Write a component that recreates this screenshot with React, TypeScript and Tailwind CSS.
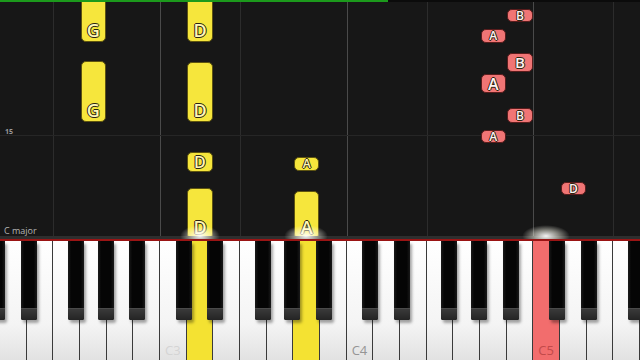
import React from 'react';

const KEY_W = 640 / 24;
const WHITE = ['D', 'E', 'F', 'G', 'A', 'B', 'C'];

// white keys start at D2
const whiteKeys = Array.from({ length: 24 }, (_, i) => {
  const name = WHITE[i % 7];
  const octave = 2 + Math.floor((i + 1) / 7);
  return { name, octave, label: name === 'C' ? `C${octave}` : '' };
});

const BLACK_OFFSET: Record<string, number> = { C: -3, D: 2, F: -4, G: -1, A: 4 };

// black key sitting right of each white note that has one
const blackKeys: { left: number }[] = [{ left: -3 - 8 }];
whiteKeys.forEach((k, i) => {
  const off = BLACK_OFFSET[k.name];
  if (off !== undefined) blackKeys.push({ left: (i + 1) * KEY_W + off - 8 });
});

const pressed: Record<number, string> = { 7: 'bg-[#f4e232]', 11: 'bg-[#f4e232]', 20: 'bg-[#f26d6d]' };

type Note = { key: number; top: number; h: number; label: string; size: number; color: 'y' | 'r' };

const notes: Note[] = [
  { key: 3, top: -6, h: 48, label: 'G', size: 18, color: 'y' },
  { key: 3, top: 61, h: 61, label: 'G', size: 18, color: 'y' },
  { key: 7, top: -6, h: 48, label: 'D', size: 18, color: 'y' },
  { key: 7, top: 62, h: 60, label: 'D', size: 18, color: 'y' },
  { key: 7, top: 152, h: 20, label: 'D', size: 16, color: 'y' },
  { key: 7, top: 188, h: 51, label: 'D', size: 18, color: 'y' },
  { key: 11, top: 157, h: 14, label: 'A', size: 12, color: 'y' },
  { key: 11, top: 191, h: 48, label: 'A', size: 18, color: 'y' },
  { key: 19, top: 9, h: 13, label: 'B', size: 12, color: 'r' },
  { key: 18, top: 29, h: 14, label: 'A', size: 12, color: 'r' },
  { key: 19, top: 53, h: 19, label: 'B', size: 15, color: 'r' },
  { key: 18, top: 74, h: 19, label: 'A', size: 16, color: 'r' },
  { key: 19, top: 108, h: 15, label: 'B', size: 12, color: 'r' },
  { key: 18, top: 130, h: 13, label: 'A', size: 12, color: 'r' },
  { key: 21, top: 182, h: 13, label: 'D', size: 12, color: 'r' },
];

const NoteBlock = ({ n }: { n: Note }) => {
  const tall = n.h > 24;
  const cls =
    n.color === 'y'
      ? 'bg-[#f6e63c] border-[#5e5410] text-[#fff7b8]'
      : 'bg-[#f07575] border-[#5a1c1c] text-[#fff2f2]';
  return (
    <div
      className={`absolute flex justify-center rounded-[5px] border ${cls} ${tall ? 'items-end pb-[2px]' : 'items-center'}`}
      style={{ left: n.key * KEY_W + 0.5, width: KEY_W - 1, top: n.top, height: n.h }}
    >
      <span
        className="font-semibold leading-none [text-shadow:-1px_0_#2a2410,1px_0_#2a2410,0_-1px_#2a2410,0_1px_#2a2410]"
        style={{ fontSize: n.size }}
      >
        {n.label}
      </span>
    </div>
  );
};

const gridLines = [
  { x: 53.33, c: 'bg-[#2c2c2c]' },
  { x: 160, c: 'bg-[#4a4a4a]' },
  { x: 240, c: 'bg-[#2c2c2c]' },
  { x: 346.67, c: 'bg-[#4a4a4a]' },
  { x: 426.67, c: 'bg-[#2c2c2c]' },
  { x: 533.33, c: 'bg-[#4a4a4a]' },
  { x: 613.33, c: 'bg-[#2c2c2c]' },
];

const glows = [
  { x: 200, w: 40 },
  { x: 306, w: 44 },
  { x: 546, w: 48 },
];

export default function App() {
  return (
    <div className="w-[640px] h-[360px] flex flex-col overflow-hidden bg-[#161616] font-['Open_Sans','Noto_Sans',sans-serif]">
      {/* piano roll */}
      <div className="relative h-[239px] overflow-hidden bg-[#171717]">
        {gridLines.map((g, i) => (
          <div key={i} className={`absolute top-0 bottom-0 w-px ${g.c}`} style={{ left: g.x }} />
        ))}
        <div className="absolute left-0 right-0 top-[135px] h-px bg-[#262626]" />
        <div className="absolute left-[5px] top-[127px] text-[7px] font-bold text-[#9a9a9a]">15</div>

        {notes.map((n, i) => (
          <NoteBlock key={i} n={n} />
        ))}

        <div className="absolute top-0 left-0 right-0 h-[2px] bg-[#0b0b0b]" />
        <div className="absolute top-0 left-0 w-[388px] h-[2px] bg-[#1c9a1c]" />

        <div className="absolute bottom-0 left-0 right-0 h-[3px] bg-[#2e2e2e]" />
        <div className="absolute left-[4px] bottom-[4px] text-[9px] text-[#b4b4b4] leading-none">C major</div>

        {glows.map((g, i) => (
          <div
            key={i}
            className="absolute bottom-[-8px] h-[22px] rounded-full bg-[radial-gradient(ellipse_at_center,rgba(255,255,255,0.95)_0%,rgba(255,255,240,0.5)_35%,rgba(255,255,255,0)_70%)]"
            style={{ left: g.x - g.w / 2, width: g.w }}
          />
        ))}
      </div>

      <div className="h-[2px] bg-[#9a1414]" />

      {/* keyboard */}
      <div className="relative flex-1">
        <div className="grid grid-cols-[repeat(24,1fr)] h-full">
          {whiteKeys.map((k, i) => (
            <div
              key={i}
              className={`relative border-r border-[#3a3a3a] flex items-end justify-center pb-[3px] ${pressed[i] ?? 'bg-[linear-gradient(#ffffff,#f4f4f4_70%,#e2e2e2)]'}`}
            >
              {k.label && (
                <span
                  className={`text-[13px] leading-none ${i === 20 ? 'text-[#c24a4a]' : i === 6 ? 'text-[#d4d4d4]' : 'text-[#959595]'}`}
                >
                  {k.label}
                </span>
              )}
            </div>
          ))}
        </div>
        {blackKeys.map((b, i) => (
          <div
            key={i}
            className="absolute top-0 w-[16px] h-[79px] flex flex-col rounded-b-[2px] bg-[#070707] shadow-[2px_3px_3px_rgba(0,0,0,0.35)]"
            style={{ left: b.left }}
          >
            <div className="flex-1 bg-[linear-gradient(90deg,#1a1a1a,#050505_20%,#050505_80%,#1a1a1a)]" />
            <div className="h-[12px] border-t border-[#4a4a4a] bg-[linear-gradient(#3a3a3a,#242424)] rounded-b-[2px]" />
          </div>
        ))}
      </div>
    </div>
  );
}
